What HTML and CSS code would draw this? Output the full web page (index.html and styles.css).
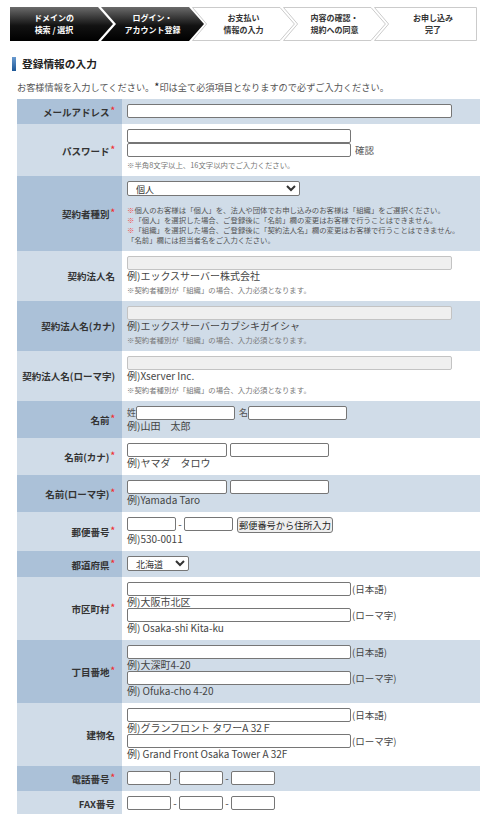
FILE: index.html
```html
<!DOCTYPE html>
<html lang="ja">
<head>
    <meta charset="UTF-8">
    <meta name="viewport" content="width=device-width, initial-scale=1.0">
    <title>登録情報の入力</title>
    <link rel="stylesheet" href="styles.css">
</head>
<body>
    <!-- progress -->
    <ol class="steps">
        <li class="step done">
            <svg viewBox="0 0 103 34" preserveAspectRatio="none">
                <defs>
                    <linearGradient id="dark" x1="0" y1="0" x2="0" y2="1">
                        <stop offset="0" stop-color="#6b6b6b"/>
                        <stop offset="0.55" stop-color="#121212"/>
                        <stop offset="1" stop-color="#000"/>
                    </linearGradient>
                </defs>
                <polygon points="0,0 88,0 103,17 88,34 0,34" fill="url(#dark)"/>
            </svg>
            <span>ドメインの<br>検索 / 選択</span>
        </li>
        <li class="step done">
            <svg viewBox="0 0 103 34" preserveAspectRatio="none">
                <polygon points="0,0 88,0 103,17 88,34 0,34 15,17" fill="url(#dark)"/>
            </svg>
            <span>ログイン・<br>アカウント登録</span>
        </li>
        <li class="step">
            <svg viewBox="0 0 103 34" preserveAspectRatio="none">
                <polygon points="0.5,0.5 88,0.5 102.4,17 88,33.5 0.5,33.5 14.6,17" fill="#fff" stroke="#cbcbcb"/>
            </svg>
            <span>お支払い<br>情報の入力</span>
        </li>
        <li class="step">
            <svg viewBox="0 0 103 34" preserveAspectRatio="none">
                <polygon points="0.5,0.5 88,0.5 102.4,17 88,33.5 0.5,33.5 14.6,17" fill="#fff" stroke="#cbcbcb"/>
            </svg>
            <span>内容の確認・<br>規約への同意</span>
        </li>
        <li class="step">
            <svg viewBox="0 0 103 34" preserveAspectRatio="none">
                <polygon points="0.5,0.5 102.5,0.5 102.5,33.5 0.5,33.5 14.6,17" fill="#fff" stroke="#cbcbcb"/>
            </svg>
            <span>お申し込み<br>完了</span>
        </li>
    </ol>

    <h2 class="sec-title">登録情報の入力</h2>
    <p class="lead">お客様情報を入力してください。<span class="mark">*</span>印は全て必須項目となりますので必ずご入力ください。</p>

    <table class="form">
        <tr>
            <th>メールアドレス<span class="req">*</span></th>
            <td><div class="line"><input class="f w-l" type="text"></div></td>
        </tr>
        <tr>
            <th>パスワード<span class="req">*</span></th>
            <td>
                <div class="line"><input class="f w-m" type="password"></div>
                <div class="line"><input class="f w-m" type="password"><span class="suffix">確認</span></div>
                <p class="note">※半角8文字以上、16文字以内でご入力ください。</p>
            </td>
        </tr>
        <tr>
            <th>契約者種別<span class="req">*</span></th>
            <td>
                <div class="line sel">
                    <select class="s w-type">
                        <option>個人</option>
                        <option>組織</option>
                    </select>
                </div>
                <p class="note notes"><span class="kome">※</span>個人のお客様は「個人」を、法人や団体でお申し込みのお客様は「組織」をご選択ください。<br><span class="kome">※</span>「個人」を選択した場合、ご登録後に「名前」欄の変更はお客様で行うことはできません。<br><span class="kome">※</span>「組織」を選択した場合、ご登録後に「契約法人名」欄の変更はお客様で行うことはできません。<br>「名前」欄には担当者名をご入力ください。</p>
            </td>
        </tr>
        <tr>
            <th>契約法人名</th>
            <td>
                <div class="line"><input class="f w-l" type="text" disabled></div>
                <p class="ex">例)エックスサーバー株式会社</p>
                <p class="note">※契約者種別が「組織」の場合、入力必須となります。</p>
            </td>
        </tr>
        <tr>
            <th>契約法人名(カナ)</th>
            <td>
                <div class="line"><input class="f w-l" type="text" disabled></div>
                <p class="ex">例)エックスサーバーカブシキガイシャ</p>
                <p class="note">※契約者種別が「組織」の場合、入力必須となります。</p>
            </td>
        </tr>
        <tr>
            <th>契約法人名(ローマ字)</th>
            <td>
                <div class="line"><input class="f w-l" type="text" disabled></div>
                <p class="ex">例)Xserver Inc.</p>
                <p class="note">※契約者種別が「組織」の場合、入力必須となります。</p>
            </td>
        </tr>
        <tr>
            <th>名前<span class="req">*</span></th>
            <td>
                <div class="line"><span class="pre">姓</span><input class="f w-n" type="text"><span class="pre gap">名</span><input class="f w-n" type="text"></div>
                <p class="ex">例)山田　太郎</p>
            </td>
        </tr>
        <tr>
            <th>名前(カナ)<span class="req">*</span></th>
            <td>
                <div class="line"><input class="f w-k" type="text"><input class="f w-n next" type="text"></div>
                <p class="ex">例)ヤマダ　タロウ</p>
            </td>
        </tr>
        <tr>
            <th>名前(ローマ字)<span class="req">*</span></th>
            <td>
                <div class="line"><input class="f w-k" type="text"><input class="f w-n next" type="text"></div>
                <p class="ex">例)Yamada Taro</p>
            </td>
        </tr>
        <tr>
            <th>郵便番号<span class="req">*</span></th>
            <td>
                <div class="line zip"><input class="f w-z" type="text"><span class="dash">-</span><input class="f w-z" type="text"><button class="btn" type="button">郵便番号から住所入力</button></div>
                <p class="ex">例)530-0011</p>
            </td>
        </tr>
        <tr>
            <th>都道府県<span class="req">*</span></th>
            <td>
                <div class="line sel">
                    <select class="s w-pref">
                        <option>北海道</option>
                        <option>青森県</option>
                        <option>岩手県</option>
                    </select>
                </div>
            </td>
        </tr>
        <tr>
            <th>市区町村<span class="req">*</span></th>
            <td>
                <div class="line"><input class="f w-m" type="text"><span class="paren">(日本語)</span></div>
                <p class="ex">例)大阪市北区</p>
                <div class="line"><input class="f w-m" type="text"><span class="paren">(ローマ字)</span></div>
                <p class="ex">例) Osaka-shi Kita-ku</p>
            </td>
        </tr>
        <tr>
            <th>丁目番地<span class="req">*</span></th>
            <td>
                <div class="line"><input class="f w-m" type="text"><span class="paren">(日本語)</span></div>
                <p class="ex">例)大深町4-20</p>
                <div class="line"><input class="f w-m" type="text"><span class="paren">(ローマ字)</span></div>
                <p class="ex">例) Ofuka-cho 4-20</p>
            </td>
        </tr>
        <tr>
            <th>建物名</th>
            <td>
                <div class="line"><input class="f w-m" type="text"><span class="paren">(日本語)</span></div>
                <p class="ex">例)グランフロント タワーA 32Ｆ</p>
                <div class="line"><input class="f w-m" type="text"><span class="paren">(ローマ字)</span></div>
                <p class="ex">例) Grand Front Osaka Tower A 32F</p>
            </td>
        </tr>
        <tr>
            <th>電話番号<span class="req">*</span></th>
            <td>
                <div class="line"><input class="f w-t" type="text"><span class="dash">-</span><input class="f w-t" type="text"><span class="dash">-</span><input class="f w-t" type="text"></div>
            </td>
        </tr>
        <tr>
            <th>FAX番号</th>
            <td>
                <div class="line"><input class="f w-t" type="text"><span class="dash">-</span><input class="f w-t" type="text"><span class="dash">-</span><input class="f w-t" type="text"></div>
            </td>
        </tr>
    </table>
</body>
</html>
```

FILE: styles.css
```css
* {
    box-sizing: border-box;
}

body {
    margin: 0;
    font-family: "Noto Sans CJK JP", "Noto Sans", sans-serif;
    color: #333;
    background: #fff;
}

/* progress steps */
.steps {
    display: flex;
    list-style: none;
    margin: 7px 0 0 10px;
    padding: 0;
}

.step {
    position: relative;
    width: 103px;
    height: 34px;
    margin-left: -12px;
    padding: 0 15px;
    display: flex;
    align-items: center;
    justify-content: center;
    font-size: 8px;
    font-weight: bold;
    line-height: 12px;
    text-align: center;
    color: #333;
}

.step:first-child {
    margin-left: 0;
    padding-left: 0;
}

.step:last-child {
    padding-right: 0;
}

.step svg {
    position: absolute;
    left: 0;
    top: 0;
    width: 100%;
    height: 100%;
}

.step span {
    position: relative;
}

.step.done {
    color: #fff;
}

/* heading */
.sec-title {
    display: flex;
    align-items: center;
    margin: 15px 0 0 12px;
    font-size: 10.7px;
    line-height: 16px;
    font-weight: bold;
    color: #222;
}

.sec-title::before {
    content: "";
    width: 4px;
    height: 14px;
    margin-right: 6px;
    background: linear-gradient(#6a9bd0, #1d5797);
}

.lead {
    margin: 8px 0 6px 17px;
    font-size: 9.2px;
    line-height: 12px;
    color: #555;
}

.mark {
    color: #222;
    font-size: 11px;
}

/* form table */
.form {
    border-collapse: collapse;
    table-layout: fixed;
    width: 463px;
    margin-left: 17px;
}

.form th {
    width: 105px;
    padding: 0 7px 0 0;
    text-align: right;
    vertical-align: middle;
    font-size: 9.5px;
    font-weight: bold;
    color: #333;
    background: #d0dce8;
}

.form td {
    padding: 5px 5px 6px;
    vertical-align: top;
    font-size: 10px;
    color: #444;
    background: #fff;
}

.form tr:nth-child(odd) th {
    background: #abc1d8;
}

.form tr:nth-child(odd) td {
    background: #d0dce8;
}

.req {
    margin-left: 1px;
    font-size: 9px;
    color: #e33;
    vertical-align: 2px;
}

.line {
    display: flex;
    align-items: center;
    height: 14px;
    line-height: 14px;
}

.line.sel {
    height: 15px;
}

.line.zip {
    height: 16px;
    align-items: flex-start;
}

.f {
    height: 14px;
    margin: 0;
    padding: 0 2px;
    border: 1px solid #767676;
    border-radius: 2px;
    background: #fff;
    font: inherit;
    font-size: 10px;
}

.f:disabled {
    background: #efefef;
    border-color: #c3c3c3;
}

.w-l { width: 325px; }
.w-m { width: 224px; }
.w-n { width: 99px; }
.w-k { width: 100px; }
.w-z { width: 49px; }
.w-t { width: 44px; }

.next {
    margin-left: 3px;
}

.pre {
    font-size: 9px;
    line-height: 12px;
    color: #555;
}

.pre.gap {
    margin-left: 4px;
}

.dash {
    width: 8px;
    text-align: center;
}

.suffix {
    margin-left: 4px;
    font-size: 9.5px;
    color: #555;
}

.paren {
    margin-left: 1px;
    font-size: 9.5px;
    color: #444;
}

.s {
    height: 15px;
    margin: 0;
    padding: 0 0 0 4px;
    border: 1px solid #767676;
    border-radius: 2px;
    background: #fff;
    font-family: inherit;
    font-size: 9px;
    color: #333;
}

.w-type { width: 173px; }
.w-pref { width: 62px; }

.btn {
    width: 96px;
    height: 16px;
    margin-left: 4px;
    padding: 0;
    border: 1px solid #767676;
    border-radius: 3px;
    background: #efefef;
    font-family: inherit;
    font-size: 9.2px;
    line-height: 14px;
    white-space: nowrap;
    color: #222;
}

.ex {
    margin: 0;
    font-size: 10px;
    line-height: 12px;
    color: #444;
    white-space: nowrap;
}

.note {
    margin: 3px 0 0;
    font-size: 7.4px;
    line-height: 10px;
    color: #777;
    white-space: nowrap;
}

.note.notes {
    margin-top: 9px;
    color: #555;
}

.kome {
    color: #e55;
}
```
